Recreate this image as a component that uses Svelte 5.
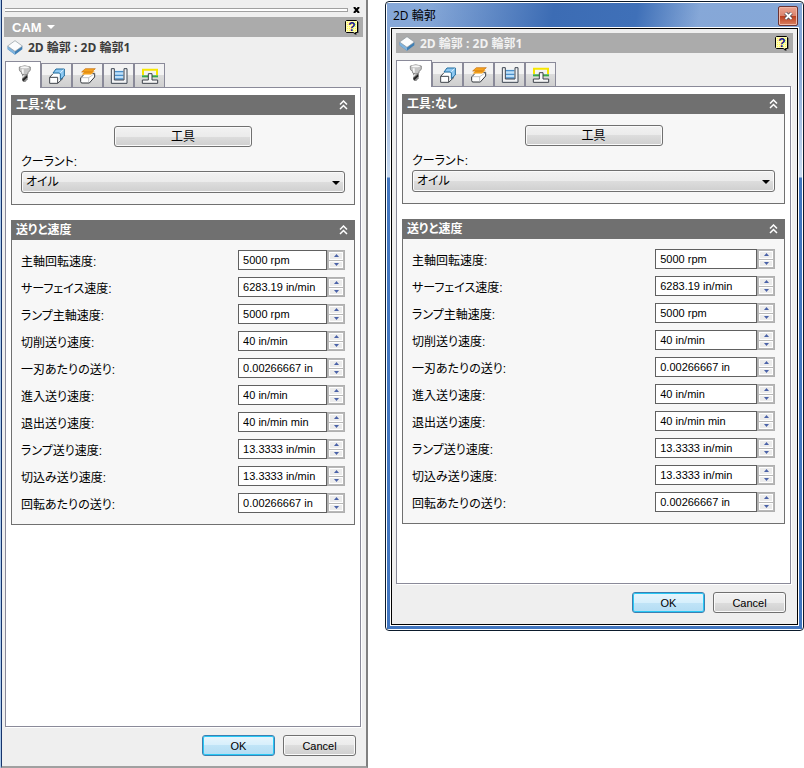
<script>
  const tabs = ["tool", "geometry", "heights", "passes", "linking"];
  const tabNames = {
    tool: "工具",
    geometry: "形状",
    heights: "高さ",
    passes: "パス",
    linking: "リンク",
  };

  let feeds = [
    { label: "主軸回転速度:", value: "5000 rpm" },
    { label: "サーフェイス速度:", value: "6283.19 in/min" },
    { label: "ランプ主軸速度:", value: "5000 rpm" },
    { label: "切削送り速度:", value: "40 in/min" },
    { label: "一刃あたりの送り:", value: "0.00266667 in" },
    { label: "進入送り速度:", value: "40 in/min" },
    { label: "退出送り速度:", value: "40 in/min min" },
    { label: "ランプ送り速度:", value: "13.3333 in/min" },
    { label: "切込み送り速度:", value: "13.3333 in/min" },
    { label: "回転あたりの送り:", value: "0.00266667 in" },
  ];

  let coolant = "オイル";
  let activeTab = "tool";
  let toolOpen = true;
  let feedsOpen = true;

  // Change the number in front of the unit
  function step(index, amount) {
    const [number, ...unit] = feeds[index].value.split(" ");
    const next = Number((parseFloat(number) + amount).toFixed(8));
    feeds[index].value = [next, ...unit].join(" ");
  }
</script>

{#snippet cube()}
  <svg class="cube" viewBox="0 0 48 45" aria-hidden="true">
    <path d="M2 18 L24 34 L46 18 L46 28 L24 44 L2 28Z" fill="#3f7fb5" />
    <path d="M2 18 L24 34 L24 44 L2 28Z" fill="#7fb3de" />
    <path d="M24 2 L46 18 L24 34 L2 18Z" fill="#fbfcfd" stroke="#8c979f" stroke-width="2" />
  </svg>
{/snippet}

{#snippet help()}
  <button class="help" aria-label="ヘルプ">
    <svg viewBox="0 0 14 15" aria-hidden="true">
      <path d="M2 2H14V13H12V15H10L8 13H2Z" fill="#777" />
      <path d="M1.5 .5H11.5L12.5 1.5V12.5H10.5V14L8.5 12.5H1.5L.5 11.5V1.5Z" fill="#fffdb8" stroke="#000" />
      <path d="M2 2.5H12M2 4.5H12M2 6.5H12M2 8.5H12M2 10.5H12" stroke="#fff34d" stroke-dasharray="1 1" />
    </svg>
    <span>?</span>
  </button>
{/snippet}

{#snippet tabIcon(name)}
  <svg class="tab-icon" viewBox="0 0 54 54" aria-hidden="true">
    {#if name === "tool"}
      <path d="M18 20 H35 V43 L28 51 H22 L18 46Z" fill="#8a8a8a" />
      <path d="M19 43 L34 30 V37 L22 49Z" fill="#222" />
      <path d="M18 34 L34 20 V26 L18 40Z" fill="#e5e5e5" />
      <path d="M10 6 Q26 -1 43 6 V15 Q41 20 36 22 V27 Q26 33 17 27 V22 Q11 20 10 15Z" fill="#c5c5c5" stroke="#686868" stroke-width="2" />
      <ellipse cx="26" cy="7" rx="13" ry="3" fill="#f7f7f7" />
      <path d="M17 13 H23 V26 H19Z" fill="#fafafa" />
    {:else if name === "geometry"}
      <path d="M5 31 L15 20 H34 L44 12 V35 L29 49 H5Z" fill="#fff" />
      <path d="M5 31 L15 20 M5 31 H29 V49 H5Z M29 49 L45 34" fill="none" stroke="#43474d" stroke-width="3" />
      <path d="M15 18 L24 6 H49 V27 L37 38 V21 L34 18Z" fill="#8cc8f2" stroke="#1f6a9c" stroke-width="3" />
      <path d="M37 17 L47 8" stroke="#e2f3ff" stroke-width="3" />
    {:else if name === "heights"}
      <path d="M5 33 L18 19 H47 V30 L31 48 H9 Q5 48 5 44Z" fill="#fff" stroke="#34383d" stroke-width="3" />
      <path d="M6 32 H29 V47 M29 32 L47 20" fill="none" stroke="#a2a6ab" stroke-width="2" />
      <path d="M18 12 H48 L36 23 H7Z" fill="#f5a21c" stroke="#fff" stroke-width="1" />
      <path d="M19 5 H49 L38 15 H8Z" fill="#f5a21c" stroke="#c46c0c" stroke-width="2" />
    {:else if name === "passes"}
      <path d="M14 11 H40 V38 H14Z" fill="#bce0fa" />
      <path d="M14 14 H40 M14 25 H40 M14 36 H40" stroke="#4b8fc9" stroke-width="4" />
      <path d="M4 5 H13 V39 H42 V5 H51 V49 H4Z" fill="#f2f3f5" stroke="#3e4652" stroke-width="3" />
    {:else}
      <path d="M6 24 V8 H48 V24" fill="none" stroke="#f7e600" stroke-width="6" />
      <path d="M3 28 H51" stroke="#3ba847" stroke-width="6" />
      <path d="M22 20 H33 V39 H50 V49 H4 V39 H22Z" fill="#f6f6f6" stroke="#3e434b" stroke-width="3" />
    {/if}
  </svg>
{/snippet}

{#snippet chevrons()}
  <svg viewBox="0 0 9 10" aria-hidden="true">
    <path d="M1 4.5 L4.5 1 L8 4.5 M1 9 L4.5 5.5 L8 9" fill="none" stroke="#fff" stroke-width="1.5" />
  </svg>
{/snippet}

{#snippet operation(id)}
  <div class="tabs" role="tablist">
    {#each tabs as name}
      <button
        class="tab"
        class:active={activeTab === name}
        role="tab"
        aria-selected={activeTab === name}
        aria-label={tabNames[name]}
        onclick={() => (activeTab = name)}
      >
        {@render tabIcon(name)}
      </button>
    {/each}
  </div>

  <div class="page" role="tabpanel">
    <section>
      <button class="section-header" aria-expanded={toolOpen} onclick={() => (toolOpen = !toolOpen)}>
        <span>工具:なし</span>
        {@render chevrons()}
      </button>
      {#if toolOpen}
        <div class="section-body">
          <button class="push tool-button">工具</button>
          <label class="coolant-label" for="{id}-coolant">クーラント:</label>
          <div class="dropdown">
            <select id="{id}-coolant" bind:value={coolant}>
              <option>オイル</option>
            </select>
            <svg viewBox="0 0 8 4" aria-hidden="true"><path d="M0 0H8L4 4Z" /></svg>
          </div>
        </div>
      {/if}
    </section>

    <section>
      <button class="section-header" aria-expanded={feedsOpen} onclick={() => (feedsOpen = !feedsOpen)}>
        <span>送りと速度</span>
        {@render chevrons()}
      </button>
      {#if feedsOpen}
        <div class="section-body feeds">
          {#each feeds as feed, index}
            <div class="feed">
              <label for="{id}-feed-{index}">{feed.label}</label>
              <div class="spin-box">
                <input id="{id}-feed-{index}" type="text" bind:value={feed.value} />
                <div class="spinner">
                  <button aria-label="増やす" onclick={() => step(index, 1)}>
                    <svg viewBox="0 0 5 3"><path d="M0 3H5L2.5 0Z" /></svg>
                  </button>
                  <button aria-label="減らす" onclick={() => step(index, -1)}>
                    <svg viewBox="0 0 5 3"><path d="M0 0H5L2.5 3Z" /></svg>
                  </button>
                </div>
              </div>
            </div>
          {/each}
        </div>
      {/if}
    </section>
  </div>

  <div class="footer">
    <button class="push default">OK</button>
    <button class="push">Cancel</button>
  </div>
{/snippet}

<main>
  <aside class="docked">
    <div class="grip">
      <div class="grip-lines"></div>
      <button class="grip-close" aria-label="閉じる">
        <svg viewBox="0 0 7 6"><path d="M1 0 L6 6 M6 0 L1 6" stroke="#000" stroke-width="2" /></svg>
      </button>
    </div>
    <div class="bar">
      <button class="cam">
        CAM
        <svg viewBox="0 0 8 4" aria-hidden="true"><path d="M0 0H8L4 4Z" fill="#fff" /></svg>
      </button>
      {@render help()}
    </div>
    <div class="name">
      {@render cube()}
      <span>2D 輪郭 : 2D 輪郭1</span>
    </div>
    {@render operation("docked")}
  </aside>

  <div class="window">
    <div class="frame">
      <div class="titlebar">
        <span>2D 輪郭</span>
        <button class="close" aria-label="閉じる">
          <svg viewBox="0 0 9 8">
            <path d="M1.5 1 L7.5 7 M7.5 1 L1.5 7" stroke="#4b4b58" stroke-width="3.5" />
            <path d="M1.5 1 L7.5 7 M7.5 1 L1.5 7" stroke="#fff" stroke-width="1.8" />
          </svg>
        </button>
      </div>
      <div class="client">
        <div class="bar window-bar">
          {@render cube()}
          <span>2D 輪郭 : 2D 輪郭1</span>
          {@render help()}
        </div>
        {@render operation("window")}
      </div>
    </div>
  </div>
</main>

<style>
  :global(body) {
    background: #fff;
  }

  main {
    display: grid;
    grid-template-columns: 368fr 419fr;
    gap: 17px;
    align-items: start;
    min-height: 100vh;
    color: #000;
    font-family: "Liberation Sans", "Noto Sans CJK JP", sans-serif;
    font-size: 12px;
    font-feature-settings: "palt";
  }

  button,
  input,
  select {
    box-sizing: border-box;
    margin: 0;
    padding: 0;
    border: none;
    border-radius: 0;
    background: none;
    color: inherit;
    font: inherit;
    font-feature-settings: inherit;
  }

  svg {
    display: block;
    flex: none;
  }

  .docked {
    box-sizing: border-box;
    display: flex;
    flex-direction: column;
    min-height: 100vh;
    margin-left: 1px;
    padding: 2px 3px 10px 2px;
    border-left: 1px solid #17346c;
    border-right: 2px solid #808080;
    border-bottom: 2px solid #a0a0a0;
    background: #efefef;
    box-shadow: -1px 0 #a9c8ea;
  }

  .grip {
    display: flex;
    align-items: center;
    gap: 5px;
    height: 15px;
    padding: 0 3px 0 1px;
  }

  .grip-lines {
    flex: 1;
    height: 2px;
    border: 1px solid #a0a0a0;
    border-left: none;
    background: #fff;
  }

  .grip-close svg {
    width: 7px;
    height: 6px;
  }

  .bar {
    display: flex;
    align-items: center;
    height: 20px;
    padding: 0 4px 0 8px;
    background: #ababab;
    color: #fff;
    font-weight: bold;
  }

  .cam {
    display: flex;
    align-items: center;
    gap: 5px;
    font-size: 13px;
  }

  .cam svg {
    width: 8px;
    height: 4px;
  }

  .help {
    display: grid;
    margin-left: auto;
    color: #14148c;
    font-family: "Liberation Sans", sans-serif;
    font-size: 12px;
    font-weight: bold;
    line-height: 14px;
  }

  .help svg,
  .help span {
    grid-area: 1 / 1;
  }

  .help svg {
    width: 14px;
    height: 15px;
  }

  .name {
    display: flex;
    align-items: center;
    gap: 5px;
    height: 20px;
    margin-bottom: 4px;
    padding-left: 3px;
    color: #3c3c3c;
    font-family: "Open Sans", "Noto Sans CJK JP", sans-serif;
    font-weight: bold;
  }

  .cube {
    width: 16px;
    height: 15px;
  }

  .tabs {
    display: flex;
    align-items: flex-end;
    height: 26px;
  }

  .docked .tabs,
  .docked .page {
    margin-left: 1px;
  }

  .tab {
    display: grid;
    place-items: center;
    width: 31px;
    height: 24px;
    border: 1px solid #8a8a99;
    border-bottom: none;
    background: linear-gradient(#f3f3f3 0 50%, #dcdcdc 50%, #cfcfcf);
  }

  .tab:first-child {
    width: 36px;
    padding-left: 4px;
  }

  .tab.active {
    position: relative;
    height: 27px;
    margin-bottom: -1px;
    padding-bottom: 2px;
    background: #fff;
  }

  .tab-icon {
    width: 18px;
    height: 18px;
  }

  .page {
    display: flex;
    flex: 1;
    flex-direction: column;
    gap: 15px;
    margin-right: 2px;
    padding: 7px 5px 59px;
    border: 1px solid #8a8a99;
    background: #fff;
    box-shadow: 1px 1px #fff;
  }

  .section-header {
    display: flex;
    align-items: center;
    justify-content: space-between;
    width: 100%;
    height: 20px;
    padding: 0 7px 0 5px;
    background: #707070;
    color: #fff;
    font-weight: bold;
    line-height: 18px;
  }

  .section-header svg {
    width: 9px;
    height: 10px;
  }

  .section-body {
    display: flex;
    flex-direction: column;
    padding: 11px 9px;
    border: 1px solid #707070;
    border-top: none;
    background: #f7f7f7;
  }

  .push {
    width: 73px;
    height: 21px;
    border: 1px solid #707070;
    border-radius: 3px;
    background: linear-gradient(#f2f2f2, #ebebeb 50%, #dddddd 50%, #cfcfcf);
    box-shadow: inset 0 0 0 1px #fafafa;
    font-size: 11px;
    line-height: 18px;
  }

  .push.default {
    border-color: #3c7fb1;
    background: linear-gradient(#e8f5fc, #d6effc 50%, #c0e4f7 50%, #b3dcf3);
    box-shadow: inset 0 0 0 1px #28c8f5;
  }

  .push.tool-button {
    align-self: center;
    width: 138px;
    font-size: 12px;
  }

  .coolant-label {
    margin-top: 6px;
    line-height: 18px;
  }

  .dropdown {
    position: relative;
  }

  .dropdown select {
    display: block;
    width: 100%;
    height: 22px;
    padding: 0 20px 0 4px;
    appearance: none;
    border: 1px solid #707070;
    border-radius: 3px;
    background: linear-gradient(#f2f2f2, #ebebeb 50%, #dddddd 50%, #cfcfcf);
    box-shadow: inset 0 0 0 1px #fafafa;
  }

  .dropdown svg {
    position: absolute;
    top: 10px;
    right: 5px;
    width: 8px;
    height: 4px;
    pointer-events: none;
  }

  .feeds {
    gap: 7px;
    padding-top: 10px;
  }

  .feed {
    display: flex;
    align-items: center;
    justify-content: space-between;
    height: 20px;
  }

  .spin-box {
    display: flex;
    width: 33%;
    height: 20px;
  }

  .spin-box input {
    flex: 1;
    min-width: 0;
    padding: 0 0 1px 4px;
    border: 1px solid #606060;
    background: #fff;
    font-size: 11px;
  }

  .spinner {
    box-sizing: border-box;
    display: grid;
    grid-template-rows: 1fr 1fr;
    gap: 1px;
    width: 18px;
    padding: 1px;
    border: 1px solid #b0b0b0;
    background: #b8b8b8;
  }

  .spinner button {
    display: grid;
    place-items: center;
    border: 1px solid #fff;
    background: #ececec;
  }

  .spinner svg {
    width: 5px;
    height: 3px;
    fill: #4a62a8;
  }

  .footer {
    display: flex;
    justify-content: flex-end;
    gap: 8px;
    margin-top: 8px;
    padding-right: 7px;
  }

  .window {
    margin-top: 1px;
    padding: 1px;
    border: 1px solid #0b1a2b;
    border-radius: 4px;
  }

  .frame {
    padding: 0 4px 4px;
    background:
      linear-gradient(100deg, transparent 10%, #3c6cb4 40%, #3f70b8 60%, transparent 75%) top / 100% 24px no-repeat,
      linear-gradient(#86a8d8, #86a6d6 60px, #c8daf0 174px, #4176c0 175px);
  }

  .titlebar {
    display: flex;
    align-items: center;
    justify-content: space-between;
    height: 25px;
    padding-left: 2px;
    font-family: "Open Sans", "Noto Sans CJK JP", sans-serif;
    line-height: 24px;
  }

  .close {
    display: grid;
    place-items: center;
    width: 20px;
    height: 20px;
    border: 1px solid #6b3434;
    border-radius: 2px;
    background: linear-gradient(#eba593, #d9826c 50%, #bb3c1c 50%, #d98060);
    box-shadow: inset 0 0 0 1px #f0b8a8;
  }

  .close svg {
    width: 9px;
    height: 8px;
  }

  .client {
    padding: 4px 4px 11px;
    border: 1px solid #000;
    outline: 1px solid #fff;
    background: #efefef;
  }

  .window-bar {
    gap: 5px;
    margin-bottom: 7px;
    padding-left: 3px;
    color: #f2f2f2;
    font-family: "Open Sans", "Noto Sans CJK JP", sans-serif;
  }
</style>
